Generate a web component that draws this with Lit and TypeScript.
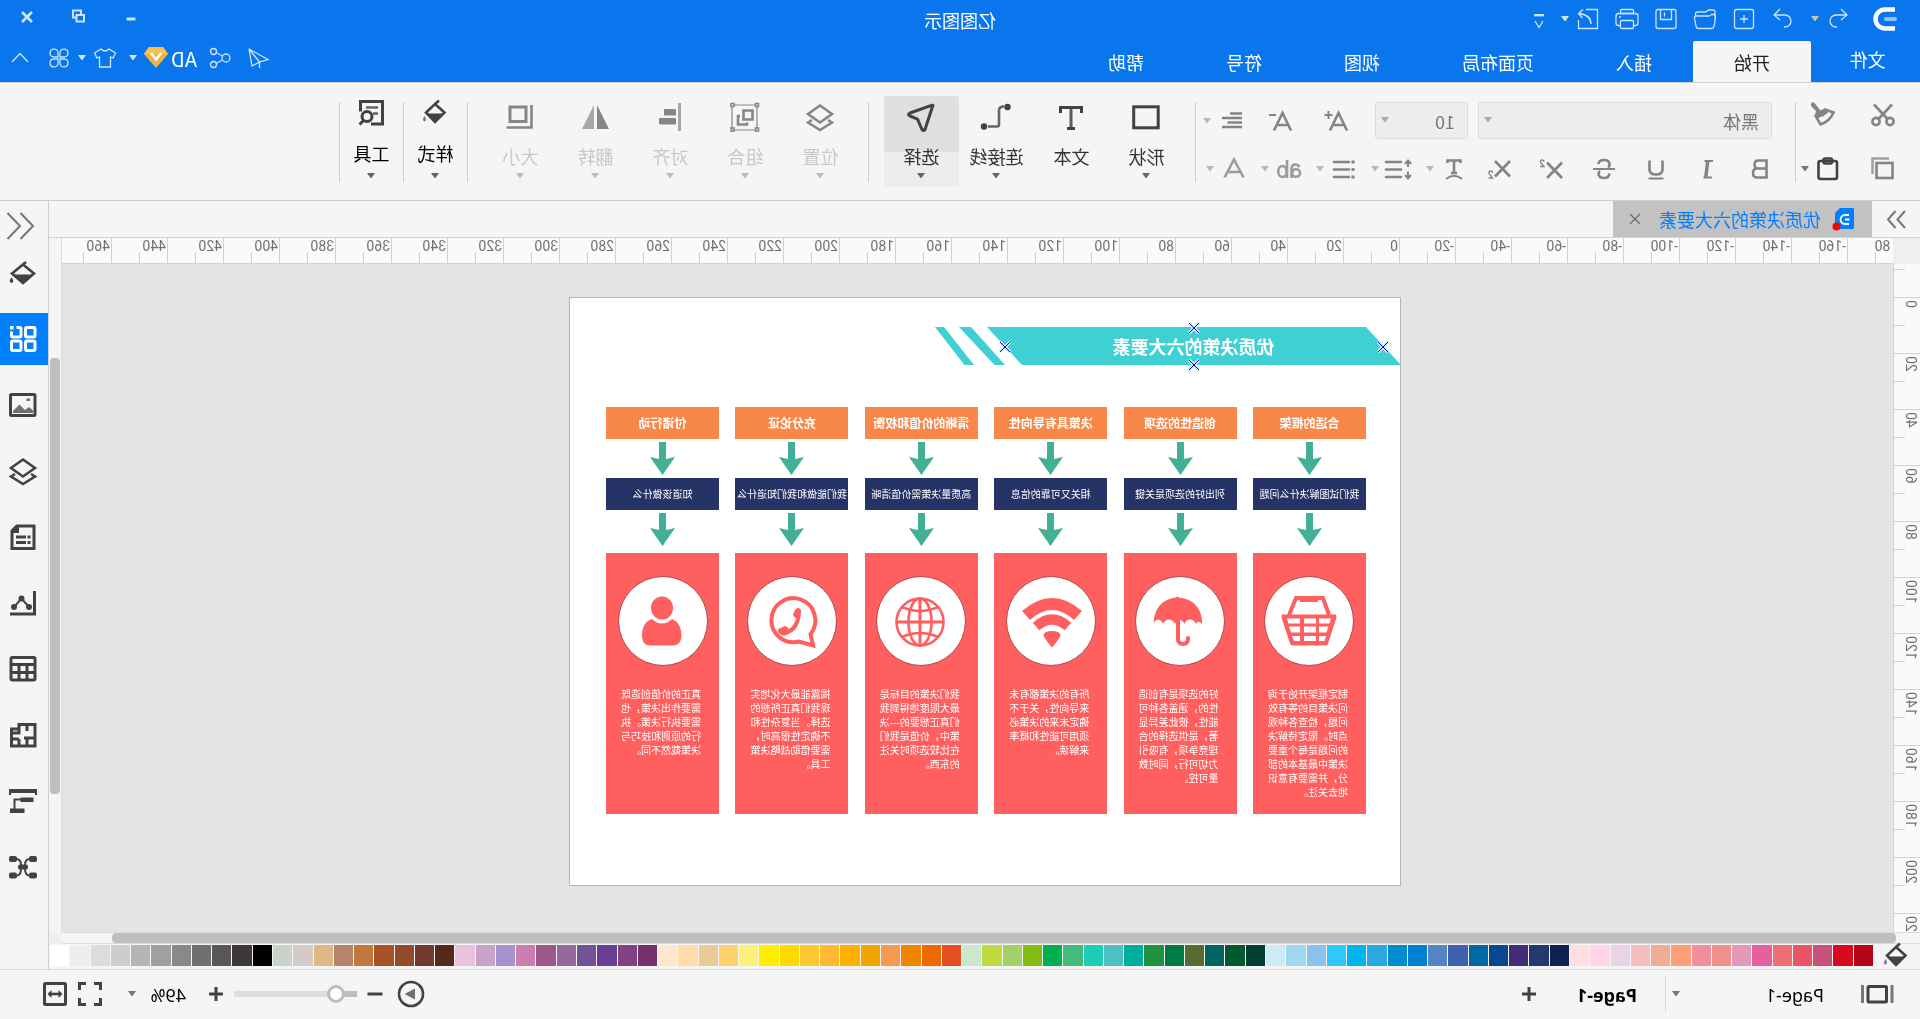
import { LitElement, html, svg, css, nothing, TemplateResult } from "lit";
import { customElement, property, state } from "lit/decorators.js";
import { classMap } from "lit/directives/class-map.js";

/* Every glyph is drawn on a 28 x 28 grid and inherits its colour from the button. */
const glyphs: Record<string, TemplateResult> = {
  undo: svg`<g class="thin"><path d="M5 10h11a6 6 0 0 1 0 12h-1M11 4l-6 6 6 5"/></g>`,
  redo: svg`<g class="thin"><path d="M23 10H12a6 6 0 0 0 0 12h1M17 4l6 6-6 5"/></g>`,
  add: svg`<g class="thin"><rect x="4.5" y="4.5" width="19" height="19" rx="2"/><path d="M14 10v8M10 14h8"/></g>`,
  folder: svg`<g class="thin"><path d="M4 16V6.500q0-1.500 1.500-1.500h5l3 2h8q2 0 2 2v2M4 16l1 5.500q.5 2 2.500 2h13q2 0 2.400-2l1.600-8.500q.4-2-1.500-2H10q-1.500 0-2.500-1.500H5q-1.500 0-1.500 1.500z"/></g>`,
  save: svg`<g class="thin"><rect x="4" y="4.500" width="20" height="19" rx="2"/><path d="M8.500 5v9.500h11V5M15.500 7.500v4"/></g>`,
  print: svg`<g class="thin"><path d="M7.500 8.500v-3q0-1 1-1h11q1 0 1 1v3M7.500 20.500h-2q-2.500 0-2.500-2.500v-7q0-2.500 2.500-2.500h17q2.500 0 2.500 2.500v7q0 2.500-2.500 2.500h-2"/><rect x="7.500" y="15.500" width="13" height="8" rx="1"/><path d="M20 12h2M7 8.500h14"/></g>`,
  exportTo: svg`<g class="thin"><path d="M16 4.500H4.500v19h19V15M11 19q0-9 12-10.500M19 4.500l4.500 4-4 4.500"/></g>`,
  more: svg`<path d="M9 9h10v2.400H9z" fill="currentColor"/><path class="thin" d="M10 16l4 6.500 4-6.500"/>`,
  plane: svg`<g class="thin"><path d="M23 5L4 15.500l8.500 2.500zM23 5l-3 17-7.500-4zM12.500 18v6"/></g>`,
  share: svg`<g class="thin"><circle cx="8" cy="14" r="4"/><circle cx="20.500" cy="7.500" r="3"/><circle cx="20.500" cy="20.500" r="3"/><path d="M11.500 12l6.500-3.500M11.500 16l6.500 3.500"/></g>`,
  shirt: svg`<path class="thin" d="M10 5l-6.500 4 2.500 5 2.500-1v10h11V13l2.500 1L24.500 9 18 5q-4 4-8 0z"/>`,
  clover: svg`<g class="thin"><path d="M13 13H8.500A4 4 0 1 1 13 8.500zM15 13h4.500A4 4 0 1 0 15 8.500zM13 15H8.500a4 4 0 1 0 4.500 4.500zM15 15h4.500a4 4 0 1 1-4.500 4.500z"/></g>`,
  fold: svg`<path class="thin" d="M6 18l8-8.500 8 8.500"/>`,
  gem: svg`<path d="M7 2h14l5 7-12 14L2 9z" fill="#f5b041"/><path d="M7 2h14l5 7H2z" fill="#fbbf4e"/><path d="M9 8l5 6.500L19 8" fill="none" stroke="#fff" stroke-width="2.600"/>`,
  minimize: svg`<path d="M9.500 14.500h9v3h-9z" fill="currentColor"/>`,
  restore: svg`<path d="M9 12h7.500v6.500H9zM12 11.500V7.500h8v7h-3" fill="none" stroke="currentColor" stroke-width="2"/>`,
  close: svg`<path d="M9 9l10 10M19 9L9 19" fill="none" stroke="currentColor" stroke-width="2.600"/>`,

  cut: svg`<g class="bold"><path d="M5 3.500l14 15M23 3.500L9 18.500"/><circle cx="7" cy="20.500" r="3.600"/><circle cx="21" cy="20.500" r="3.600"/></g>`,
  painter: svg`<path d="M17 9l5-6.500q2-2 3.500-.5t0 3.500L21 10l1 4-9 1.500-2-6z" fill="currentColor"/><path class="bold" d="M3.500 11.500L12 8.500l9.500 6.500-5 8.500Q7 20 3.500 11.500z"/><path d="M11 8l11 7-2 3L9 12z" fill="currentColor"/>`,
  copyAll: svg`<rect class="bold" x="4.500" y="8" width="16" height="15"/><path d="M8 3.500h16.500V19" class="bold" opacity=".75"/>`,
  paste: svg`<g class="bold"><rect x="5" y="6" width="18.500" height="18" rx="2"/><rect x="10" y="3.500" width="8.500" height="5" rx="1.500"/></g>`,
  growText: svg`<path class="bold" d="M4 23.500L12.500 6 21 23.500M7.500 18h10"/><path class="mid" d="M18.500 8h8M22.500 4v8"/>`,
  shrinkText: svg`<path class="bold" d="M4 23.500L12.500 6 21 23.500M7.500 18h10"/><path class="mid" d="M19 8h7"/>`,
  align: svg`<path class="bold" d="M4 6.500h12M4 11h20M4 15.500h14.500M4 20h20"/>`,
  bold: svg`<path class="bold" d="M7.500 5.500h8q4 0 4 4t-4 4h-8zM7.500 13.500h9.500q4 0 4 4.500t-4 4.500H7.500z"/>`,
  italic: svg`<path class="mid" d="M9 6h8.500M10 22.500h8.500"/><path d="M12.500 6h3.500l2 16.500h-3.500z" fill="currentColor"/>`,
  underline: svg`<path class="bold" d="M7.500 5.500v9q0 5 6.500 5t6.500-5v-9"/><path class="mid" d="M6.500 23.500h15"/>`,
  strike: svg`<path class="bold" d="M19.500 9q0-4-5.500-4T8.500 9.500q0 2 1.500 3M8.500 18.500q.5 4.500 5.500 4.500t5.500-4q0-2-1.500-3"/><path class="mid" d="M3 14h22"/>`,
  sup: svg`<path class="bold" d="M4 7.500l15 15.500M19 7.500L4 23"/><path class="thin" d="M22 7q0-2 2-2t1.500 2.500L22 11.500h4"/>`,
  sub: svg`<path class="bold" d="M4 6l15 15.500M19 6L4 21.500"/><path class="thin" d="M21.500 18q0-2 2-2t1.500 2.500l-3.500 4.500h4"/>`,
  curveText: svg`<path class="bold" d="M7.500 8V5.500h13V8M14 5.500v12M11 18h6"/><path class="mid" d="M6 24q8-6.500 16 0"/>`,
  lineGap: svg`<path class="bold" d="M12 7h15M12 14.500h15M12 22h15" stroke-linecap="round"/><path class="mid" d="M5 12V6M2 9l3-3.500L8 9M5 16.500v6M2 20l3 3.500L8 20"/>`,
  bullets: svg`<path class="bold" d="M9 7h15M9 14.500h15M9 22h15" stroke-linecap="round"/><path d="M3.500 5.500h3v3h-3zM3.500 13h3v3h-3zM3.500 20.500h3v3h-3z" fill="currentColor"/>`,
  caseText: svg`<g class="bold"><ellipse cx="7" cy="18" rx="4" ry="3.800"/><path d="M3.500 12q1.500-2.500 4-2.500 4 0 4 4.500v9"/><path d="M16 5v18"/><ellipse cx="20.500" cy="16.500" rx="4.300" ry="5.500"/></g>`,
  fontColor: svg`<path class="bold" d="M4.500 22.500L14 4.500l9.500 18M8.500 17h11"/>`,

  shape: svg`<rect x="1.800" y="3.800" width="24.500" height="21" class="heavy"/>`,
  text: svg`<path class="heavy" d="M3.500 10V4.500h21V10M10 25.500h8"/><path class="heavy" d="M14 4.500v21" opacity=".85"/>`,
  connector: svg`<path class="bold" d="M6 3.500q5 0 5 4v14q0 2 2 2h9" opacity=".8"/><circle cx="2.500" cy="4" r="3.200" fill="currentColor"/><circle cx="26" cy="23.500" r="3.200" fill="currentColor"/>`,
  select: svg`<path class="heavy" d="M2.500 3.500Q1 2 3.500 2.300L25 10q3 1.500 0 3l-7.500 3.200L13 26.500q-1.500 2-3 0z" stroke-linejoin="round"/>`,
  layers: svg`<path class="bold" d="M14 2.500L26 11l-12 8.500L2 11z"/><path class="bold" d="M6 17l-4 2.500 12 7.500 12-7.500-4-2.500"/>`,
  group: svg`<g class="mid"><path d="M2 2h25v25H2z" stroke-width="1.200"/><g fill="#f5f5f5" stroke-width="1.600"><rect x=".5" y=".5" width="3" height="3"/><rect x="25" y=".5" width="3" height="3"/><rect x=".5" y="25" width="3" height="3"/><rect x="25" y="25" width="3" height="3"/></g></g><g class="bold"><path d="M6.500 7.500h9v9h-9z"/><path d="M19 13h2v8.500h-9V19.500"/></g>`,
  alignObjects: svg`<path d="M3 0h3v28H3z" fill="currentColor" opacity=".7"/><rect x="8" y="6" width="12" height="6.500" rx="1" fill="currentColor"/><rect x="8" y="15" width="17" height="6.500" rx="1" fill="currentColor"/>`,
  flip: svg`<path d="M0 26L12 2v24z" fill="currentColor"/><path d="M27 26L15 2v24z" fill="currentColor" opacity=".7"/>`,
  size: svg`<rect x="8" y="4" width="16" height="14.500" class="heavy"/><path class="bold" d="M2.500 2v22.500h25"/>`,
  style: svg`<path class="bold" d="M14 5L4.500 13.500 14 23l9-9.500zM10 1.500l4.500 4"/><path d="M5.500 14.500h17L14 22.500z" fill="currentColor"/><path d="M24.500 17q3 4.500 0 5.500-3-1 0-5.500z" fill="currentColor" opacity=".7"/>`,
  tools: svg`<path class="heavy" d="M14 25H2.500V2.500h22v10"/><path class="bold" d="M7 8.500h12M7 14.500h5" opacity=".8"/><circle cx="18" cy="17.500" r="5" class="heavy"/><path class="heavy" d="M21.500 21.500l4 4"/>`,

  bucket: svg`<path class="bold" d="M14 5.500L3 14.500 14 24l11-9.500zM11 3l8 6.500"/><path d="M4 15.500h20L14 24z" fill="currentColor"/><path d="M25.500 18.500q3.500 4.500 0 5.500-3.500-1 0-5.500z" fill="currentColor"/>`,
  symbols: svg`<g class="heavy"><rect x="2" y="2.500" width="9.500" height="9.500" rx="1.500"/><rect x="2" y="16" width="9.500" height="9.500" rx="1.500"/><rect x="16" y="16" width="9.500" height="9.500" rx="1.500"/><path d="M20.500 2.500H17.500q-1.500 0-1.500 1.500v6.500q0 1.500 1.500 1.500H24q1.500 0 1.500-1.500V6.500"/></g><path d="M23.500 1h3.500v3.500h-3.500z" fill="currentColor"/>`,
  image: svg`<rect class="heavy" x="2" y="3.500" width="24.500" height="21" rx="1"/><path d="M4 22v-2.500l4-3.500 4 3 5.500-5.500L24 20v2z" fill="currentColor" opacity=".75"/><path d="M7 7.500h3.500V10H7z" fill="currentColor" opacity=".75"/>`,
  note: svg`<path class="heavy" d="M3 3h17l5 5v17.500H3z"/><path d="M18 2h3l5 5v3h-8z" fill="currentColor"/><path class="heavy" d="M11 14h10M11 19.500h10M6.500 14h3M6.500 19.500h3"/>`,
  chart: svg`<path class="heavy" d="M2.500 2v23H27"/><path class="mid" d="M8 18l7.500-8.500 7.500 8.500"/><g fill="currentColor"><circle cx="8" cy="18" r="3"/><circle cx="15.500" cy="9.500" r="3"/><circle cx="23" cy="18" r="3"/></g>`,
  table: svg`<rect class="heavy" x="2" y="2.500" width="24" height="22.500" rx="1.500"/><path class="heavy" d="M2 9.500h24M2 17.500h24M10 9.500V25M18 9.500V25"/>`,
  floor: svg`<path class="heavy" d="M2 3.500h16v4.500h7.500V25H2zM10 3.500V10M2 17h8v8M10 17h3M18 8v4h7M18 18h7M18 18v7"/>`,
  gantt: svg`<path d="M0 2h28v6h-2V6H2v2H0z" fill="currentColor"/><path d="M3.500 10.500h13V15h-13zM12.500 21.500H27v4.500H12.500z" fill="currentColor"/><path class="mid" d="M16 12.500h6.500V22"/>`,
  mind: svg`<g fill="currentColor"><rect x="0" y="3" width="8" height="6" rx="2"/><rect x="20" y="3" width="8" height="6" rx="2"/><rect x="0" y="19.500" width="8" height="6" rx="2"/><rect x="20" y="19.500" width="8" height="6" rx="2"/><rect x="9" y="11.500" width="10" height="5" rx="2"/></g><path class="mid" d="M7 6q5 0 5 6v4q0 6.500-5 6.500M21 6q-5 0-5 6v4q0 6.500 5 6.500"/>`,
  expand: svg`<path class="mid" d="M14.500 1L2 14l12.500 13M27.500 1L15 14l12.500 13"/>`,
  collapse: svg`<path class="mid" d="M5 6l7.500 8.500L5 23M14.500 6l7.500 8.500-7.500 8.500"/>`,
  closeThin: svg`<path class="thin" d="M9 9l10 10M19 9L9 19"/>`,
  plus: svg`<path class="heavy" d="M7 14h14M14 7v14"/>`,
  minus: svg`<path class="heavy" d="M6.500 14h15"/>`,
  pages: svg`<rect class="heavy" x="4.500" y="6.500" width="18.500" height="15.500" rx="1"/><path class="heavy" d="M-1 5v18M28.500 5v18" opacity=".7"/>`,
  play: svg`<circle class="bold" cx="14" cy="14" r="12"/><path d="M10 8.500l10.500 5.500L10 19.500z" fill="currentColor" opacity=".75"/>`,
  fullscreen: svg`<path class="heavy" d="M3.500 10V3.500H10M18 3.500h6.500V10M24.500 18v6.500H18M10 24.500H3.500V18"/>`,
  fit: svg`<rect class="heavy" x="3.500" y="3.500" width="21" height="21" rx="1"/><path class="bold" d="M8 14h12"/><path d="M6.500 14l4-4v8zM21.500 14l-4-4v8z" fill="currentColor"/>`,
};

const icon = (name: string) => html`<svg class="icon" width="28" height="28" viewBox="0 0 28 28" aria-hidden="true">${glyphs[name]}</svg>`;
const caret = () => html`<svg class="caret" width="8" height="6" viewBox="0 0 8 6" aria-hidden="true"><path d="M0 0h8L4.500 5h-1z" fill="currentColor"/></svg>`;

const shared = css`
  * { box-sizing: border-box; }
  button, select, input {
    font: inherit;
    color: inherit;
    margin: 0;
    padding: 0;
    border: 0;
    background: none;
    border-radius: 0;
  }
  button { display: flex; align-items: center; justify-content: center; cursor: pointer; }
  svg { display: block; overflow: visible; flex: none; }
  .thin, .mid, .bold, .heavy { fill: none; stroke: currentColor; }
  .thin { stroke-width: 1.3px; }
  .mid { stroke-width: 2px; }
  .bold { stroke-width: 2.6px; }
  .heavy { stroke-width: 3px; }
`;

/* ---------- Title bar ---------- */
@customElement("title-bar")
class TitleBar extends LitElement {
  @state() active = "开始";

  static styles = [shared, css`
    :host { display: block; background: #0976ed; color: #cfe3fb; border-bottom: 1px solid #cfd3d8; }
    .bar { display: grid; grid-template-columns: 1fr auto 1fr; grid-template-rows: 41px 41px; }
    .quick { display: flex; align-items: center; padding: 0 0 3px 25px; }
    .logo { margin-right: 15px; }
    .quick button { width: 39px; height: 32px; }
    .quick .drop { width: 8px; }
    .quick .warm { color: #c9c3b0; margin-right: 8px; }
    .quick .last { margin-right: 2px; }
    .title { font-size: 18px; line-height: 24px; color: #fff; margin: 0; padding-top: 8px; font-weight: 400; }
    .window { display: flex; justify-content: flex-end; padding-right: 1px; }
    .window button { width: 52px; height: 34px; }
    .tabs { grid-column: 1 / 3; display: flex; align-items: stretch; }
    .tabs button { padding: 0 41px; font-size: 18px; line-height: 24px; color: #fff; border-radius: 2px 2px 0 0; }
    .tabs .file { width: 109px; padding: 0 4px 6px 0; justify-content: center; }
    .tabs .on { background: #f5f5f5; color: #222; }
    .extras { display: flex; align-items: center; justify-content: flex-end; padding: 0 0 8px; }
    .extras button { width: 38px; height: 32px; }
    .extras .drop { width: 8px; }
    .extras .member { margin-right: 5px; }
    .extras .end { width: 40px; }
    .extras .ad { width: auto; color: #fff; font-size: 20px; line-height: 24px; gap: 1px; margin-right: 5px; padding: 3px 0 0 4px; }
  `];

  render() {
    const tabs = ["开始", "插入", "页面布局", "视图", "符号", "帮助"];
    return html`
      <header class="bar">
        <div class="quick">
          <svg class="logo" width="22" height="24" viewBox="0 0 22 24" aria-hidden="true">
            <path d="M0 2.500h10a9.500 9.500 0 0 1 0 19H0" fill="none" stroke="#fff" stroke-width="4.500"/>
            <path d="M0 12h9" stroke="#8fc0f8" stroke-width="4" stroke-linecap="round"/>
          </svg>
          <button aria-label="撤销">${icon("undo")}</button>
          <button class="drop warm" aria-label="撤销列表">${caret()}</button>
          <button aria-label="重做">${icon("redo")}</button>
          <button aria-label="新建">${icon("add")}</button>
          <button aria-label="打开">${icon("folder")}</button>
          <button aria-label="保存">${icon("save")}</button>
          <button aria-label="打印">${icon("print")}</button>
          <button aria-label="导出">${icon("exportTo")}</button>
          <button class="drop last" aria-label="导出列表">${caret()}</button>
          <button aria-label="更多">${icon("more")}</button>
        </div>
        <h1 class="title">亿图图示</h1>
        <div class="window">
          <button aria-label="最小化">${icon("minimize")}</button>
          <button aria-label="还原">${icon("restore")}</button>
          <button aria-label="关闭">${icon("close")}</button>
        </div>
        <nav class="tabs">
          <button class="file">文件</button>
          ${tabs.map((t) => html`<button class=${classMap({ on: t === this.active })} @click=${() => (this.active = t)}>${t}</button>`)}
        </nav>
        <div class="extras">
          <button aria-label="发送">${icon("plane")}</button>
          <button aria-label="分享">${icon("share")}</button>
          <button class="ad">AD${icon("gem")}</button>
          <button class="drop member" aria-label="会员">${caret()}</button>
          <button aria-label="主题">${icon("shirt")}</button>
          <button class="drop" aria-label="主题列表">${caret()}</button>
          <button aria-label="应用">${icon("clover")}</button>
          <button class="end" aria-label="收起">${icon("fold")}</button>
        </div>
      </header>`;
  }
}

/* ---------- Ribbon ---------- */
@customElement("ribbon-bar")
class RibbonBar extends LitElement {
  @state() tool = "选择";

  static styles = [shared, css`
    :host { display: block; background: #f5f5f5; border-bottom: 1px solid #cfcfcf; color: #848484; }
    .ribbon { display: flex; padding: 13px 0; height: 117px; }
    .group { display: flex; }
    .group::after { content: ""; width: 1px; height: 80px; margin-top: 6px; background: #cfcfcf; }
    .rows { display: flex; flex-direction: column; gap: 17px; padding-top: 6px; }
    .row { display: flex; height: 26px; }
    .row.first { height: 37px; }
    .row button { width: 38px; height: 26px; }
    .row .arrow { width: 8px; color: #777; }
    .clip { padding-left: 18px; width: 124px; }
    .clip .row { gap: 17px; }
    .clip .arrow { margin-left: -17px; }
    .clip .row.first { gap: 22px; }
    .dark { color: #424242; }
    .font .first { align-items: center; padding-left: 23px; }
    .font .first button { width: 56px; }
    .font .first .narrow { width: 42px; }
    .font .row .arrow { width: 8px; color: #b9b9b9; }
    .font { width: 599px; }
    .font .second { padding-left: 9px; }
    .font .second > button { width: 52px; }
    .splits { display: flex; gap: 13px; padding-left: 6px; }
    .splits button { width: 42px; gap: 6px; color: #848484; }
    .splits .pale { color: #9c9c9c; }
    .splits .caret { color: #b9b9b9; }
    .pick { position: relative; height: 37px; margin-right: 10px; border: 1px solid #dcdcdc; border-radius: 3px; background: #ededed; }
    .pick select { appearance: none; width: 100%; height: 35px; padding: 0 12px; font-size: 18px; color: #777; }
    .pick .caret { position: absolute; right: 5px; top: 14px; color: #a9a9a9; pointer-events: none; }
    .pick.face { width: 294px; }
    .pick.points { width: 93px; }
    .big { display: flex; flex-direction: column; justify-content: flex-start; width: 75px; height: 91px; padding: 7px 0 0; font-size: 18px; line-height: 24px; border-radius: 3px; color: #333; }
    .big .icon { color: #424242; margin-bottom: 13px; }
    .big .caret { margin-top: 5px; color: #666; }
    .big.on { background: linear-gradient(#dfdfdf 56px, #ededed 56px); }
    .big.off { color: #c8c8c8; }
    .big.off .icon { color: #868686; }
    .big.off .caret { color: #bcbcbc; }
    .big.slim { width: 63px; padding: 3px 0 0; color: #000; }
    .big.slim .icon { margin-bottom: 14px; }
    .big.slim .caret { margin-top: 8px; }
    .draw { padding: 0 0 0 11px; }
    .draw::after { margin-left: 15px; }
    .arrange { padding: 0 0 0 10px; }
    .arrange::after { margin-left: 15px; }
  `];

  render() {
    const draw: [string, string, boolean][] = [["形状", "shape", true], ["文本", "text", false], ["连接线", "connector", true], ["选择", "select", true]];
    const arrange: [string, string][] = [["位置", "layers"], ["组合", "group"], ["对齐", "alignObjects"], ["翻转", "flip"], ["大小", "size"]];
    const marks: [string, string][] = [["粗体", "bold"], ["斜体", "italic"], ["下划线", "underline"], ["删除线", "strike"], ["上标", "sup"], ["下标", "sub"]];
    const splits: [string, string, boolean][] = [["弯曲文本", "curveText", false], ["行距", "lineGap", false], ["项目符号", "bullets", false], ["大小写", "caseText", true], ["字体颜色", "fontColor", true]];
    return html`
      <div class="ribbon">
        <section class="group">
          <div class="rows clip">
            <div class="row first">
              <button aria-label="剪切">${icon("cut")}</button>
              <button aria-label="格式刷">${icon("painter")}</button>
            </div>
            <div class="row">
              <button aria-label="复制">${icon("copyAll")}</button>
              <button class="dark" aria-label="粘贴">${icon("paste")}</button>
              <button class="arrow" aria-label="粘贴选项">${caret()}</button>
            </div>
          </div>
        </section>
        <section class="group">
          <div class="rows font">
            <div class="row first">
              <div class="pick face"><select aria-label="字体"><option>黑体</option></select>${caret()}</div>
              <div class="pick points"><select aria-label="字号"><option>10</option></select>${caret()}</div>
              <button aria-label="增大字号">${icon("growText")}</button>
              <button aria-label="减小字号">${icon("shrinkText")}</button>
              <button class="narrow" aria-label="文本对齐">${icon("align")}</button>
              <button class="arrow" aria-label="对齐选项">${caret()}</button>
            </div>
            <div class="row second">
              ${marks.map(([l, g]) => html`<button aria-label=${l}>${icon(g)}</button>`)}
              <div class="splits">
                ${splits.map(([l, g, pale]) => html`<button class=${classMap({ pale })} aria-label=${l}>${icon(g)}${caret()}</button>`)}
              </div>
            </div>
          </div>
        </section>
        <section class="group draw">
          ${draw.map(([l, g, menu]) => html`<button class=${classMap({ big: true, on: l === this.tool })} @click=${() => (this.tool = l)}>${icon(g)}${l}${menu ? caret() : nothing}</button>`)}
        </section>
        <section class="group arrange">
          ${arrange.map(([l, g]) => html`<button class="big off">${icon(g)}${l}${caret()}</button>`)}
        </section>
        <section class="group"><button class="big slim">${icon("style")}样式${caret()}</button></section>
        <section class="group"><button class="big slim">${icon("tools")}工具${caret()}</button></section>
      </div>`;
  }
}

/* ---------- Diagram page ---------- */
interface Factor { head: string; sub: string; body: string[]; art: TemplateResult; }

const factors: Factor[] = [
  {
    head: "合适的框架", sub: "我们试图解决什么问题",
    body: ["制定框架开始于询", "问决策目的等有效", "问题，检查各种观", "点时。限定待解决", "的问题是每个重要", "决策中最基本的部", "分，并需要有意识", "地去关注。"],
    art: svg`<path d="M-20-6l6-17h27l7 17" fill="none" stroke="currentColor" stroke-width="4"/><path d="M-9-25H9v6H-9z" fill="currentColor"/><path d="M-27-6.500h54l.5 3-8.500 26q-.5 2-2.500 2h-33q-2 0-2.500-2l-8.500-26z" fill="currentColor"/><path d="M-22-2.500h12v5h-10.500zM-7-2.500H5v5H-7zM9-2.500h13l-1.500 5H9zM-19.500 5.500h9.500v6h-7.500zM-7 5.500H5v6H-7zM9 5.500h11l-2 6H9zM-17 15h7v5h-5.500zM-7 15H5v5H-7zM9 15h8l-2 5H9z" fill="#fff"/>`,
  },
  {
    head: "创造性的选项", sub: "列出好的选项是关键",
    body: ["好的选项是有创造", "性的，涵盖各种可", "能性，彼此差异显", "著，是供选择的合", "理竞争项，有吸引", "力切可行，同时数", "量可控。"],
    art: svg`<path d="M-22 3C-22-12-14-22 1-23.500q1-2 3 0C18-22 26.500-12 26.500 3q-1-4-4.500-4.500-4 .5-5 4.500-2-4.500-6-4.500T5 3Q4-.5 2-1.500-3-1-4.500 3-6-1.500-10-1.500T-16 3q-2-4.500-6 0z" fill="currentColor"/><path d="M2-2v20q0 5-5 5t-5-5v-1" fill="none" stroke="currentColor" stroke-width="4" stroke-linecap="round"/>`,
  },
  {
    head: "决策具有导向性", sub: "相关又可靠的信息",
    body: ["所有的决策都有未", "来导向性，关于不", "确定未来的决策必", "须用可能性和概率", "来解读。"],
    art: svg`<g transform="translate(-1 0)" fill="none" stroke="currentColor"><path d="M-26-5.500q26-23 52 0" stroke-width="12"/><path d="M-16 5.500q16-14 32 0" stroke-width="10"/></g><path d="M-9.500 14q1-4 8.500-4t8.500 4q.5 2-8.500 12.500-9-10.500-8.500-12.500z" fill="currentColor"/>`,
  },
  {
    head: "清晰的价值和权衡", sub: "高质量决策需价值清晰",
    body: ["我们决策的目标是", "最大限度地得到我", "们真正想要的---决", "策中，价值是我们", "在比较选项时关注", "的东西。"],
    art: svg`<g fill="none" stroke="currentColor" stroke-width="2.600"><circle cx="1" cy="1" r="23.500"/><ellipse cx="1" cy="1" rx="11.500" ry="23.500"/><path d="M1-23v48M-22.500 1h47" stroke-width="3"/><path d="M-17-14q18 8 36 0M-17 16q18-8 36 0"/></g>`,
  },
  {
    head: "充分论证", sub: "我们能做和我们知道什么",
    body: ["揭露能最大化地实", "现我们真正所想的", "选择。当复杂性和", "不确定性很高时，", "需要借助战略决策", "工具。"],
    art: svg`<path d="M-18.500 13A22 22 0 1 1-7 20.500l-14 4z" fill="none" stroke="currentColor" stroke-width="4"/><path d="M-9-11q3-4 6 0l2 4.500q0 2-3 3.500Q-3 4 3 8q2-3 4-3l6 2.500q2 1.500 1 3.500-3 4-7 3.500Q-9 10-9-11z" fill="currentColor"/>`,
  },
  {
    head: "付诸行动", sub: "知道该做什么",
    body: ["真正的价值创造既", "需要作出决策，也", "需要执行决策。执", "行的原则和技巧与", "决策截然不同。"],
    art: svg`<ellipse cx="1" cy="-13" rx="11" ry="11.500" fill="currentColor"/><path d="M-9-2q10 9 20 0 10 3 10 17 0 9-8 9.500h-23q-8-.5-8.500-9.500 0-13 9.500-17z" fill="currentColor"/>`,
  },
];

@customElement("diagram-page")
class DiagramPage extends LitElement {
  static styles = [shared, css`
    :host { display: block; background: #fff; border: 1px solid #b4b4b4; color: #fff; }
    .banner { position: absolute; left: 0; top: 29px; width: 466px; height: 38px; }
    .caption { position: absolute; left: 17px; top: 29px; width: 379px; margin: 0; text-align: center; font-size: 18px; line-height: 38px; font-weight: 700; }
    .factors { position: absolute; left: 34px; top: 109px; width: 760px; display: flex; justify-content: space-between; }
    .factor { width: 113px; display: flex; flex-direction: column; align-items: center; white-space: nowrap; }
    .head, .sub { width: 100%; height: 32px; margin: 0; text-align: center; line-height: 32px; }
    .head { background: #f78849; font-size: 12px; font-weight: 700; }
    .sub { background: #263367; font-size: 10px; }
    .down { margin: 3px 0; }
    .card { width: 100%; height: 261px; margin-top: 4px; background: #ff5f5f; padding-top: 23px; }
    .disc { width: 90px; height: 90px; margin: 0 auto 21px; border-radius: 50%; background: #fff; border: 1px solid #b04a4a; color: #ff5f5f; display: flex; align-items: center; justify-content: center; }
    .body { margin: 0 0 0 18px; font-size: 10px; line-height: 14px; font-variant-ligatures: none; }
    .line { display: block; }
  `];

  render() {
    const handles = [[17, 20], [206, 1], [206, 38], [395, 20]];
    return html`
      <svg class="banner" viewBox="0 0 466 38" aria-hidden="true">
        <path d="M34 0h379l-35 38H-1zM429 0h12l-35.500 38H395zM456 0h9l-29.500 38H426z" fill="#3fd0d4"/>
        ${handles.map(([x, y]) => svg`<g transform="translate(${x} ${y})"><path d="M-5-5L5 5M5-5L-5 5" stroke="#cdeff5" stroke-width="3.500"/><path d="M-5-5L5 5M5-5L-5 5" stroke="#0000d8" stroke-width="1"/></g>`)}
      </svg>
      <h2 class="caption">优质决策的六大要素</h2>
      <div class="factors">
        ${factors.map((f) => html`
          <article class="factor">
            <h3 class="head">${f.head}</h3>
            ${this.arrow()}
            <p class="sub">${f.sub}</p>
            ${this.arrow()}
            <div class="card">
              <div class="disc"><svg width="60" height="60" viewBox="-30 -30 60 60" aria-hidden="true">${f.art}</svg></div>
              <p class="body">${f.body.map((l) => html`<span class="line">${l}</span>`)}</p>
            </div>
          </article>`)}
      </div>`;
  }

  private arrow() {
    return html`<svg class="down" width="25" height="33" viewBox="0 0 25 33" aria-hidden="true"><path d="M9 0h7v17l9-2-12.500 18L0 15l9 2z" fill="#42b096"/></svg>`;
  }
}

/* ---------- Ruler ---------- */
@customElement("scale-ruler")
class ScaleRuler extends LitElement {
  @property({ type: Number }) from = 0;
  @property({ type: Number }) to = 100;
  @property({ type: Boolean, reflect: true }) vertical = false;

  static styles = [shared, css`
    :host { display: block; overflow: hidden; background: #fafafa; color: #707070; border-bottom: 1px solid #d4d4d4; font-family: Roboto, sans-serif; font-size: 14px; line-height: 17px; min-width: 0; min-height: 0; }
    :host([vertical]) { border-bottom: 0; border-right: 1px solid #d4d4d4; }
    .track { display: flex; height: 25px; margin-left: -11px; }
    .cell { flex: none; width: 56px; padding-left: 1px; border-left: 1px solid #d0d0d0; background: linear-gradient(#d0d0d0, #d0d0d0) 27px 14px / 1px 11px no-repeat; }
    :host([vertical]) .track { flex-direction: column; height: auto; margin: -23px 0 0; }
    :host([vertical]) .cell { width: auto; height: 56px; padding: 2px 0 0 1px; border-left: 0; border-top: 1px solid #d0d0d0; background: linear-gradient(#d0d0d0, #d0d0d0) 15px 27px / 11px 1px no-repeat; }
    :host([vertical]) .mark { display: block; writing-mode: vertical-rl; transform: rotate(180deg); width: 17px; }
  `];

  render() {
    const marks: number[] = [];
    for (let v = this.from; v <= this.to; v += 20) marks.push(v);
    return html`<div class="track">${marks.map((v) => html`<div class="cell"><span class="mark">${v}</span></div>`)}</div>`;
  }
}

const palette = [
  "b50515", "d90a1e", "c9527a", "e95565", "ed6e74", "e75f9d", "e299b7", "f0908a", "f1909c", "ff9f7a", "f0ac96", "f6bfbd", "e9d4e7", "ffd4e4", "ffdfe4",
  "102250", "233870", "412c78", "084890", "0068a6", "4062ae", "5583c4", "0080d0", "008cd0", "2ba8e2", "00b4f0", "30c8fa", "8cc2ec", "a0d8f0", "cdeaf6",
  "004032", "005a2c", "006460", "556b2f", "007a46", "1f9440", "00ada0", "50bfc2", "1cceb4", "46b97c", "00b050", "84bc14", "a4d068", "c0da40", "cce8cc",
  "e55020", "ed6900", "f08500", "f59a50", "f0a500", "ffb000", "ffb932", "fdc932", "ffd900", "ffee00", "fdf07a", "fdd26e", "e9cb96", "ffdcaa", "fce8d0",
  "79306e", "834085", "683f94", "735298", "96689e", "9c5888", "cb7cb0", "a991ce", "c5a4c8", "eac1da", "58281a", "733b30", "924c2a", "a65328", "c0783f",
  "b4856a", "deb887", "d5cbc6", "cad3cb", "000000", "3e3838", "595757", "707070", "898989", "9fa0a0", "b4b5b5", "cccdcd", "dcdcdc", "eeeeee", "ffffff",
];

/* ---------- Application shell ---------- */
@customElement("app-root")
class AppRoot extends LitElement {
  @state() panel = "symbols";

  static styles = [shared, css`
    :host { display: block; height: 100vh; overflow: hidden; font-family: "Noto Sans CJK SC", "Noto Sans", sans-serif; background: #f5f5f5; }
    .app { display: flex; flex-direction: column; height: 100%; transform: scaleX(-1); color: #424242; }
    .main { flex: 1; min-height: 0; display: flex; }
    .work { flex: 1; min-width: 0; display: flex; flex-direction: column; }
    .docs { display: flex; height: 37px; border-bottom: 1px solid #d4d4d4; color: #777; }
    .docs .toggle { width: 48px; }
    .doc { display: flex; align-items: center; width: 259px; padding: 0 8px 0 18px; background: #c2c2c2; }
    .doc .name { margin: 0 auto 0 14px; font-size: 18px; line-height: 24px; color: #007fff; }
    .doc .shut { width: 28px; color: #6c6c6c; }
    .stage { flex: 1; min-height: 0; display: grid; grid-template: 26px minmax(0, 1fr) 12px / 27px minmax(0, 1fr) 13px; }
    .corner { background: #efefef; }
    .canvas { position: relative; overflow: hidden; background: #e4e4e4; }
    .sheet { position: absolute; left: 492px; top: 33px; width: 832px; height: 589px; }
    .vbar { grid-row: span 2; border-left: 1px solid #dcdcdc; padding: 0 1px; display: grid; grid-template-rows: 120fr 437fr 138fr; }
    .vbar .thumb { grid-row: 2; }
    .thumb { background: #bebebe; border-radius: 4px; }
    .hbar { grid-column: 1 / 3; border-top: 1px solid #dcdcdc; border-bottom: 1px solid #dcdcdc; padding-left: 24px; display: grid; grid-template-columns: 1784fr 50fr; }
    .colors { display: flex; height: 25px; padding: 1px 1px 3px 0; color: #424242; }
    .colors .fill { width: 47px; }
    .swatches { flex: 1; display: flex; gap: 1px; }
    .swatch { flex: 1; height: 21px; }
    .side { width: 49px; border-left: 1px solid #cfcfcf; display: flex; flex-direction: column; }
    .side button { height: 52px; margin-bottom: 14px; padding-left: 2px; }
    .side .toggle { height: 48px; margin-bottom: -2px; color: #777; padding: 2px 0 0 6px; }
    .side .on { background: #007fff; color: #fff; }
    .status { display: flex; align-items: center; height: 50px; border-top: 1px solid #d8d8d8; padding: 0 41px 2px 29px; font-family: "Noto Sans", sans-serif; font-size: 18px; color: #424242; }
    .status button { width: 28px; height: 36px; }
    .menu { position: relative; color: #000; }
    .menu select { appearance: none; height: 30px; padding-top: 2px; }
    .menu .caret { position: absolute; right: 0; top: 12px; color: #777; pointer-events: none; }
    .pages { width: 152px; margin-left: 39px; }
    .pages select { width: 152px; }
    .line { width: 1px; height: 37px; margin: 0 28px 0 6px; background: #d8d8d8; }
    .status .page { width: auto; margin-right: 34px; padding-top: 2px; color: #000; font-weight: 700; }
    .space { flex: 1; }
    .status .minus { margin: 0 4px 0 8px; }
    .zoom { appearance: none; width: 123px; height: 18px; margin-right: 4px; background: linear-gradient(90deg, #bdbdbd 16%, #dedede 16%) 0 6px / 100% 6px no-repeat; }
    .zoom::-webkit-slider-thumb { appearance: none; width: 18px; height: 18px; border-radius: 50%; background: #fff; border: 3px solid #bdbdbd; }
    .percent { width: 58px; margin: 0 24px 0 16px; }
    .percent select { width: 58px; }
    .status .fit { margin-left: 7px; }
  `];

  render() {
    const panels = ["bucket", "symbols", "image", "layers", "note", "chart", "table", "floor", "gantt", "mind"];
    const names = ["样式", "符号库", "图片", "图层", "备注", "图表", "表格", "平面图", "甘特图", "思维导图"];
    return html`
      <div class="app">
        <title-bar></title-bar>
        <ribbon-bar></ribbon-bar>
        <main class="main">
          <div class="work">
            <div class="docs">
              <button class="toggle" aria-label="展开符号库">${icon("collapse")}</button>
              <div class="doc">
                <svg width="19" height="22" viewBox="0 0 19 22" aria-hidden="true">
                  <path d="M1 0h13l5 5v15q0 1-1 1H1q-1 0-1-1V1q0-1 1-1z" fill="#007fff"/>
                  <path d="M5 7h4a4.500 4.500 0 0 1 0 9H5M4.500 11.500H9" fill="none" stroke="#fff" stroke-width="1.800"/>
                  <circle cx="17.500" cy="18.500" r="4" fill="#f00"/>
                </svg>
                <span class="name">优质决策的六大要素</span>
                <button class="shut" aria-label="关闭文档">${icon("closeThin")}</button>
              </div>
            </div>
            <div class="stage">
              <div class="corner"></div>
              <scale-ruler .from=${-180} .to=${460}></scale-ruler>
              <div class="vbar"><div class="thumb"></div></div>
              <scale-ruler vertical .from=${-20} .to=${220}></scale-ruler>
              <div class="canvas"><diagram-page class="sheet"></diagram-page></div>
              <div class="hbar"><div class="thumb"></div></div>
              <div class="corner"></div>
            </div>
            <div class="colors">
              <button class="fill" aria-label="填充">${icon("style")}</button>
              <div class="swatches">
                ${palette.map((c) => html`<button class="swatch" aria-label="#${c}" style="background:#${c}"></button>`)}
              </div>
            </div>
          </div>
          <aside class="side">
            <button class="toggle" aria-label="展开面板">${icon("expand")}</button>
            ${panels.map((p, i) => html`<button class=${classMap({ on: p === this.panel })} aria-label=${names[i]} @click=${() => (this.panel = p)}>${icon(p)}</button>`)}
          </aside>
        </main>
        <footer class="status">
          <button aria-label="页面列表">${icon("pages")}</button>
          <div class="menu pages"><select aria-label="当前页"><option>Page-1</option></select>${caret()}</div>
          <div class="line"></div>
          <button class="page">Page-1</button>
          <button aria-label="添加页">${icon("plus")}</button>
          <div class="space"></div>
          <button aria-label="放映">${icon("play")}</button>
          <button class="minus" aria-label="缩小">${icon("minus")}</button>
          <input class="zoom" type="range" min="0" max="100" value="11" aria-label="缩放">
          <button aria-label="放大">${icon("plus")}</button>
          <div class="menu percent"><select aria-label="缩放比例"><option>49%</option></select>${caret()}</div>
          <button aria-label="全屏">${icon("fullscreen")}</button>
          <button class="fit" aria-label="适合宽度">${icon("fit")}</button>
        </footer>
      </div>`;
  }
}
